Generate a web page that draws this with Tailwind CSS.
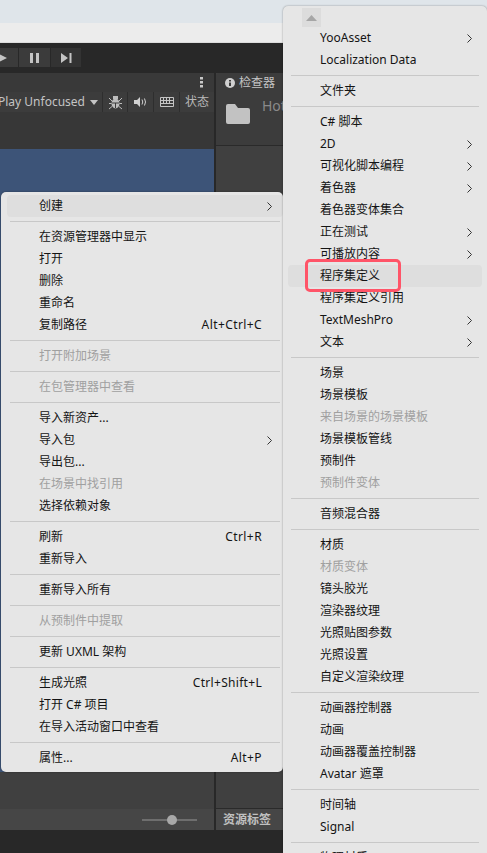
<!DOCTYPE html>
<html lang="zh-CN">
  <head>
    <meta charset="UTF-8" />
    <title>Unity 创建菜单</title>
    <script src="https://cdn.jsdelivr.net/npm/@tailwindcss/browser@4"></script>
  </head>
  <body class="relative w-[487px] h-[853px] overflow-hidden bg-[#282828] font-['Noto_Sans','Noto_Sans_CJK_SC',sans-serif] text-[12px]">
    <!-- Window chrome -->
    <div class="h-[23px] bg-[#dfe5ea]"></div>
    <div class="h-[20px] bg-[#ececec] border-b border-[#dcdcdc]"></div>

    <!-- Play bar -->
    <div class="h-[30px] bg-[#282828] flex items-center gap-px pb-[1px]">
      <div class="w-[18px] h-[19px] bg-[#3b3b3b] flex items-center overflow-hidden">
        <svg class="ml-[-3px] shrink-0" width="10" height="10" viewBox="0 0 10 10"><path d="M0 0L10 5L0 10Z" fill="#c4c4c4" /></svg>
      </div>
      <div class="w-[31px] h-[19px] bg-[#3b3b3b] flex items-center justify-center">
        <svg width="9" height="10" viewBox="0 0 9 10"><path d="M0 0H3V10H0ZM6 0H9V10H6Z" fill="#c4c4c4" /></svg>
      </div>
      <div class="w-[30px] h-[19px] bg-[#333333] flex items-center justify-center">
        <svg width="11" height="10" viewBox="0 0 11 10"><path d="M0 0L7 5L0 10ZM8.500 0H10.500V10H8.500Z" fill="#c4c4c4" /></svg>
      </div>
    </div>

    <!-- Editor panels -->
    <div class="flex gap-[2px] h-[757px]">
      <div class="w-[214px] flex flex-col">
        <div class="h-[19px] bg-[#393939] flex items-center justify-end pr-[11px]">
          <svg width="3" height="11" viewBox="0 0 3 11"><path d="M0 0H3V2.500H0ZM0 4H3V6.500H0ZM0 8H3V10.500H0Z" fill="#c8c8c8" /></svg>
        </div>
        <div class="h-[20px] bg-[#3c3c3c] flex items-center text-[#c4c4c4] text-[12px] shadow-[0_1px_1px_#2d2d2d]">
          <div class="w-[103px] h-full flex items-center justify-between pr-[4px] border-r border-[#2e2e2e] overflow-hidden">
            <span class="whitespace-nowrap ml-[-2px]">Play Unfocused</span>
            <svg class="shrink-0" width="8" height="5" viewBox="0 0 8 5"><path d="M0 0H8L4 5Z" fill="#c4c4c4" /></svg>
          </div>
          <div class="w-[25px] h-full flex items-center justify-center border-r border-[#2e2e2e]">
            <svg width="15" height="15" viewBox="0 0 15 15"><ellipse cx="7.500" cy="8.500" rx="4" ry="5" fill="#bdbdbd" /><path d="M1 3L4 6M14 3L11 6M1 8.500H4M14 8.500H11M1 14L4 11.500M14 14L11 11.500" stroke="#bdbdbd" /><path d="M5 1H10V4H5Z" fill="#bdbdbd" /><path d="M3.500 8H11.500M7.500 8V13" stroke="#3c3c3c" /></svg>
          </div>
          <div class="w-[26px] h-full flex items-center justify-center border-r border-[#2e2e2e]">
            <svg width="13" height="10" viewBox="0 0 13 10"><path d="M0 3H3L6 0V10L3 7H0Z" fill="#d0d0d0" /><path d="M8 2.500Q9.500 5 8 7.500M10.500 1.500Q12.500 5 10.500 8.500" stroke="#d0d0d0" fill="none" /></svg>
          </div>
          <div class="w-[26px] h-full flex items-center justify-center border-r border-[#2e2e2e]">
            <svg width="14" height="10" viewBox="0 0 14 10"><path d="M.5.5H13.500V9.500H.5ZM.5 3.500H13.500M.5 6.500H13.500M3.500.5V6.500M6.500.5V6.500M9.500.5V6.500" stroke="#c4c4c4" fill="none" /></svg>
          </div>
          <div class="flex-1 text-center text-[12px] text-[#b8b8b8]">状态</div>
        </div>
        <div class="h-[37px] bg-[#373737]"></div>
        <div class="h-[623px] bg-[#3d5478]"></div>
        <div class="h-[37px] bg-[#404040]"></div>
        <div class="h-[21px] bg-[#464646] flex items-center justify-end pr-[17px]">
          <div class="relative w-[55px] h-[2px] bg-[#6e6e6e]">
            <div class="absolute left-[25px] top-[-4px] w-[10px] h-[10px] rounded-full bg-[#a8a8a8]"></div>
          </div>
        </div>
      </div>
      <div class="w-[69px] flex flex-col bg-[#404040]">
        <div class="h-[19px] bg-[#3c3c3c] rounded-tl-[3px] flex items-center pl-[9px] gap-[4px] text-[#c4c4c4] whitespace-nowrap">
          <svg class="shrink-0" width="10" height="10" viewBox="0 0 10 10"><circle cx="5" cy="5" r="5" fill="#d0d0d0" /><path d="M4 2H6V3.500H4ZM4 4.500H6V8H4Z" fill="#3c3c3c" /></svg>
          <span>检查器</span>
        </div>
        <div class="h-[54px] bg-[#3c3c3c] border-b border-[#2a2a2a] flex pl-[10px] gap-[12px] text-[#8a8a8a] text-[14px] whitespace-nowrap overflow-hidden">
          <svg class="mt-[12px] shrink-0" width="24" height="20" viewBox="0 0 24 20"><path d="M0 2Q0 0 2 0H9L12 4H22Q24 4 24 6V18Q24 20 22 20H2Q0 20 0 18Z" fill="#c2c2c2" /></svg>
          <span class="mt-[3px]">Hot</span>
        </div>
        <div class="h-[663px] border-b border-[#2a2a2a]"></div>
        <div class="h-[21px] bg-[#464646] flex items-center pl-[7px] text-[#c0c0c0] font-bold whitespace-nowrap">资源标签</div>
      </div>
    </div>

    <!-- Context menu -->
    <div class="absolute left-[1px] top-[192px] w-[282px] py-[3px] pl-[6px] rounded-[5px] bg-[#e6e6e6] text-[#141414] shadow-[0_0_2px_#00000066]">
      <div class="h-[22px] flex items-center justify-between pl-[32px] pr-[11px] rounded-[4px] bg-[#dedede]">
        <span>创建</span>
        <svg width="5" height="9" viewBox="0 0 5 9"><path d="M.5.5L4.500 4.500L.5 8.500" stroke="#333333" fill="none" /></svg>
      </div>
      <div class="h-[9px] flex items-center pl-[3px] pr-[3px]"><div class="w-full h-px bg-[#c8c8c8]"></div></div>
      <div class="h-[22px] flex items-center pl-[32px]">在资源管理器中显示</div>
      <div class="h-[22px] flex items-center pl-[32px]">打开</div>
      <div class="h-[22px] flex items-center pl-[32px]">删除</div>
      <div class="h-[22px] flex items-center pl-[32px]">重命名</div>
      <div class="h-[22px] flex items-center justify-between pl-[32px] pr-[21px]"><span>复制路径</span><span class="tracking-[0.4px]">Alt+Ctrl+C</span></div>
      <div class="h-[9px] flex items-center pl-[3px] pr-[3px]"><div class="w-full h-px bg-[#c8c8c8]"></div></div>
      <div class="h-[22px] flex items-center pl-[32px] text-[#a0a0a0]">打开附加场景</div>
      <div class="h-[9px] flex items-center pl-[3px] pr-[3px]"><div class="w-full h-px bg-[#c8c8c8]"></div></div>
      <div class="h-[22px] flex items-center pl-[32px] text-[#a0a0a0]">在包管理器中查看</div>
      <div class="h-[9px] flex items-center pl-[3px] pr-[3px]"><div class="w-full h-px bg-[#c8c8c8]"></div></div>
      <div class="h-[22px] flex items-center pl-[32px]">导入新资产...</div>
      <div class="h-[22px] flex items-center justify-between pl-[32px] pr-[11px]">
        <span>导入包</span>
        <svg width="5" height="9" viewBox="0 0 5 9"><path d="M.5.5L4.500 4.500L.5 8.500" stroke="#333333" fill="none" /></svg>
      </div>
      <div class="h-[22px] flex items-center pl-[32px]">导出包...</div>
      <div class="h-[22px] flex items-center pl-[32px] text-[#a0a0a0]">在场景中找引用</div>
      <div class="h-[22px] flex items-center pl-[32px]">选择依赖对象</div>
      <div class="h-[9px] flex items-center pl-[3px] pr-[3px]"><div class="w-full h-px bg-[#c8c8c8]"></div></div>
      <div class="h-[22px] flex items-center justify-between pl-[32px] pr-[21px]"><span>刷新</span><span class="tracking-[0.4px]">Ctrl+R</span></div>
      <div class="h-[22px] flex items-center pl-[32px]">重新导入</div>
      <div class="h-[9px] flex items-center pl-[3px] pr-[3px]"><div class="w-full h-px bg-[#c8c8c8]"></div></div>
      <div class="h-[22px] flex items-center pl-[32px]">重新导入所有</div>
      <div class="h-[9px] flex items-center pl-[3px] pr-[3px]"><div class="w-full h-px bg-[#c8c8c8]"></div></div>
      <div class="h-[22px] flex items-center pl-[32px] text-[#a0a0a0]">从预制件中提取</div>
      <div class="h-[9px] flex items-center pl-[3px] pr-[3px]"><div class="w-full h-px bg-[#c8c8c8]"></div></div>
      <div class="h-[22px] flex items-center pl-[32px]">更新 UXML 架构</div>
      <div class="h-[9px] flex items-center pl-[3px] pr-[3px]"><div class="w-full h-px bg-[#c8c8c8]"></div></div>
      <div class="h-[22px] flex items-center justify-between pl-[32px] pr-[21px]"><span>生成光照</span><span class="tracking-[0.3px]">Ctrl+Shift+L</span></div>
      <div class="h-[22px] flex items-center pl-[32px]">打开 C# 项目</div>
      <div class="h-[22px] flex items-center pl-[32px]">在导入活动窗口中查看</div>
      <div class="h-[9px] flex items-center pl-[3px] pr-[3px]"><div class="w-full h-px bg-[#c8c8c8]"></div></div>
      <div class="h-[22px] flex items-center justify-between pl-[32px] pr-[21px]"><span>属性...</span><span class="tracking-[0.4px]">Alt+P</span></div>
    </div>

    <!-- Create submenu -->
    <div class="absolute left-[283px] top-[6px] w-[204px] h-[847px] overflow-hidden pl-[5px] pr-[5px] rounded-tl-[5px] rounded-tr-[5px] bg-[#e6e6e6] text-[#141414] shadow-[0_0_2px_#00000066]">
      <div class="h-[21px] pt-[2px] pl-[14px]">
        <div class="w-[19px] h-[19px] bg-[#dcdcdc] flex items-center justify-center">
          <svg width="11" height="6" viewBox="0 0 11 6"><path d="M5.500 0L11 6H0Z" fill="#a6a6a6" /></svg>
        </div>
      </div>
      <div class="h-[22px] flex items-center justify-between pl-[32px] pr-[10px]">
        <span>YooAsset</span>
        <svg width="5" height="9" viewBox="0 0 5 9"><path d="M.5.5L4.500 4.500L.5 8.500" stroke="#333333" fill="none" /></svg>
      </div>
      <div class="h-[22px] flex items-center pl-[32px]">Localization Data</div>
      <div class="h-[9px] flex items-center pl-[3px] pr-[3px]"><div class="w-full h-px bg-[#c8c8c8]"></div></div>
      <div class="h-[22px] flex items-center pl-[32px]">文件夹</div>
      <div class="h-[9px] flex items-center pl-[3px] pr-[3px]"><div class="w-full h-px bg-[#c8c8c8]"></div></div>
      <div class="h-[22px] flex items-center pl-[32px]">C# 脚本</div>
      <div class="h-[22px] flex items-center justify-between pl-[32px] pr-[10px]">
        <span>2D</span>
        <svg width="5" height="9" viewBox="0 0 5 9"><path d="M.5.5L4.500 4.500L.5 8.500" stroke="#333333" fill="none" /></svg>
      </div>
      <div class="h-[22px] flex items-center justify-between pl-[32px] pr-[10px]">
        <span>可视化脚本编程</span>
        <svg width="5" height="9" viewBox="0 0 5 9"><path d="M.5.5L4.500 4.500L.5 8.500" stroke="#333333" fill="none" /></svg>
      </div>
      <div class="h-[22px] flex items-center justify-between pl-[32px] pr-[10px]">
        <span>着色器</span>
        <svg width="5" height="9" viewBox="0 0 5 9"><path d="M.5.5L4.500 4.500L.5 8.500" stroke="#333333" fill="none" /></svg>
      </div>
      <div class="h-[22px] flex items-center pl-[32px]">着色器变体集合</div>
      <div class="h-[22px] flex items-center justify-between pl-[32px] pr-[10px]">
        <span>正在测试</span>
        <svg width="5" height="9" viewBox="0 0 5 9"><path d="M.5.5L4.500 4.500L.5 8.500" stroke="#333333" fill="none" /></svg>
      </div>
      <div class="h-[22px] flex items-center justify-between pl-[32px] pr-[10px]">
        <span>可播放内容</span>
        <svg width="5" height="9" viewBox="0 0 5 9"><path d="M.5.5L4.500 4.500L.5 8.500" stroke="#333333" fill="none" /></svg>
      </div>
      <div class="relative h-[22px] flex items-center pl-[32px] rounded-[4px] bg-[#dedede]">
        <span>程序集定义</span>
        <div class="absolute left-[17px] top-[-6px] w-[96px] h-[33px] rounded-[5px] border-[3px] border-[#ff5468]"></div>
      </div>
      <div class="h-[22px] flex items-center pl-[32px]">程序集定义引用</div>
      <div class="h-[22px] flex items-center justify-between pl-[32px] pr-[10px]">
        <span>TextMeshPro</span>
        <svg width="5" height="9" viewBox="0 0 5 9"><path d="M.5.5L4.500 4.500L.5 8.500" stroke="#333333" fill="none" /></svg>
      </div>
      <div class="h-[22px] flex items-center justify-between pl-[32px] pr-[10px]">
        <span>文本</span>
        <svg width="5" height="9" viewBox="0 0 5 9"><path d="M.5.5L4.500 4.500L.5 8.500" stroke="#333333" fill="none" /></svg>
      </div>
      <div class="h-[9px] flex items-center pl-[3px] pr-[3px]"><div class="w-full h-px bg-[#c8c8c8]"></div></div>
      <div class="h-[22px] flex items-center pl-[32px]">场景</div>
      <div class="h-[22px] flex items-center pl-[32px]">场景模板</div>
      <div class="h-[22px] flex items-center pl-[32px] text-[#a0a0a0]">来自场景的场景模板</div>
      <div class="h-[22px] flex items-center pl-[32px]">场景模板管线</div>
      <div class="h-[22px] flex items-center pl-[32px]">预制件</div>
      <div class="h-[22px] flex items-center pl-[32px] text-[#a0a0a0]">预制件变体</div>
      <div class="h-[9px] flex items-center pl-[3px] pr-[3px]"><div class="w-full h-px bg-[#c8c8c8]"></div></div>
      <div class="h-[22px] flex items-center pl-[32px]">音频混合器</div>
      <div class="h-[9px] flex items-center pl-[3px] pr-[3px]"><div class="w-full h-px bg-[#c8c8c8]"></div></div>
      <div class="h-[22px] flex items-center pl-[32px]">材质</div>
      <div class="h-[22px] flex items-center pl-[32px] text-[#a0a0a0]">材质变体</div>
      <div class="h-[22px] flex items-center pl-[32px]">镜头胶光</div>
      <div class="h-[22px] flex items-center pl-[32px]">渲染器纹理</div>
      <div class="h-[22px] flex items-center pl-[32px]">光照贴图参数</div>
      <div class="h-[22px] flex items-center pl-[32px]">光照设置</div>
      <div class="h-[22px] flex items-center pl-[32px]">自定义渲染纹理</div>
      <div class="h-[9px] flex items-center pl-[3px] pr-[3px]"><div class="w-full h-px bg-[#c8c8c8]"></div></div>
      <div class="h-[22px] flex items-center pl-[32px]">动画器控制器</div>
      <div class="h-[22px] flex items-center pl-[32px]">动画</div>
      <div class="h-[22px] flex items-center pl-[32px]">动画器覆盖控制器</div>
      <div class="h-[22px] flex items-center pl-[32px]">Avatar 遮罩</div>
      <div class="h-[9px] flex items-center pl-[3px] pr-[3px]"><div class="w-full h-px bg-[#c8c8c8]"></div></div>
      <div class="h-[22px] flex items-center pl-[32px]">时间轴</div>
      <div class="h-[22px] flex items-center pl-[32px]">Signal</div>
      <div class="h-[9px] flex items-center pl-[3px] pr-[3px]"><div class="w-full h-px bg-[#c8c8c8]"></div></div>
      <div class="h-[22px] flex items-center pl-[32px]">物理材质</div>
    </div>
  </body>
</html>
